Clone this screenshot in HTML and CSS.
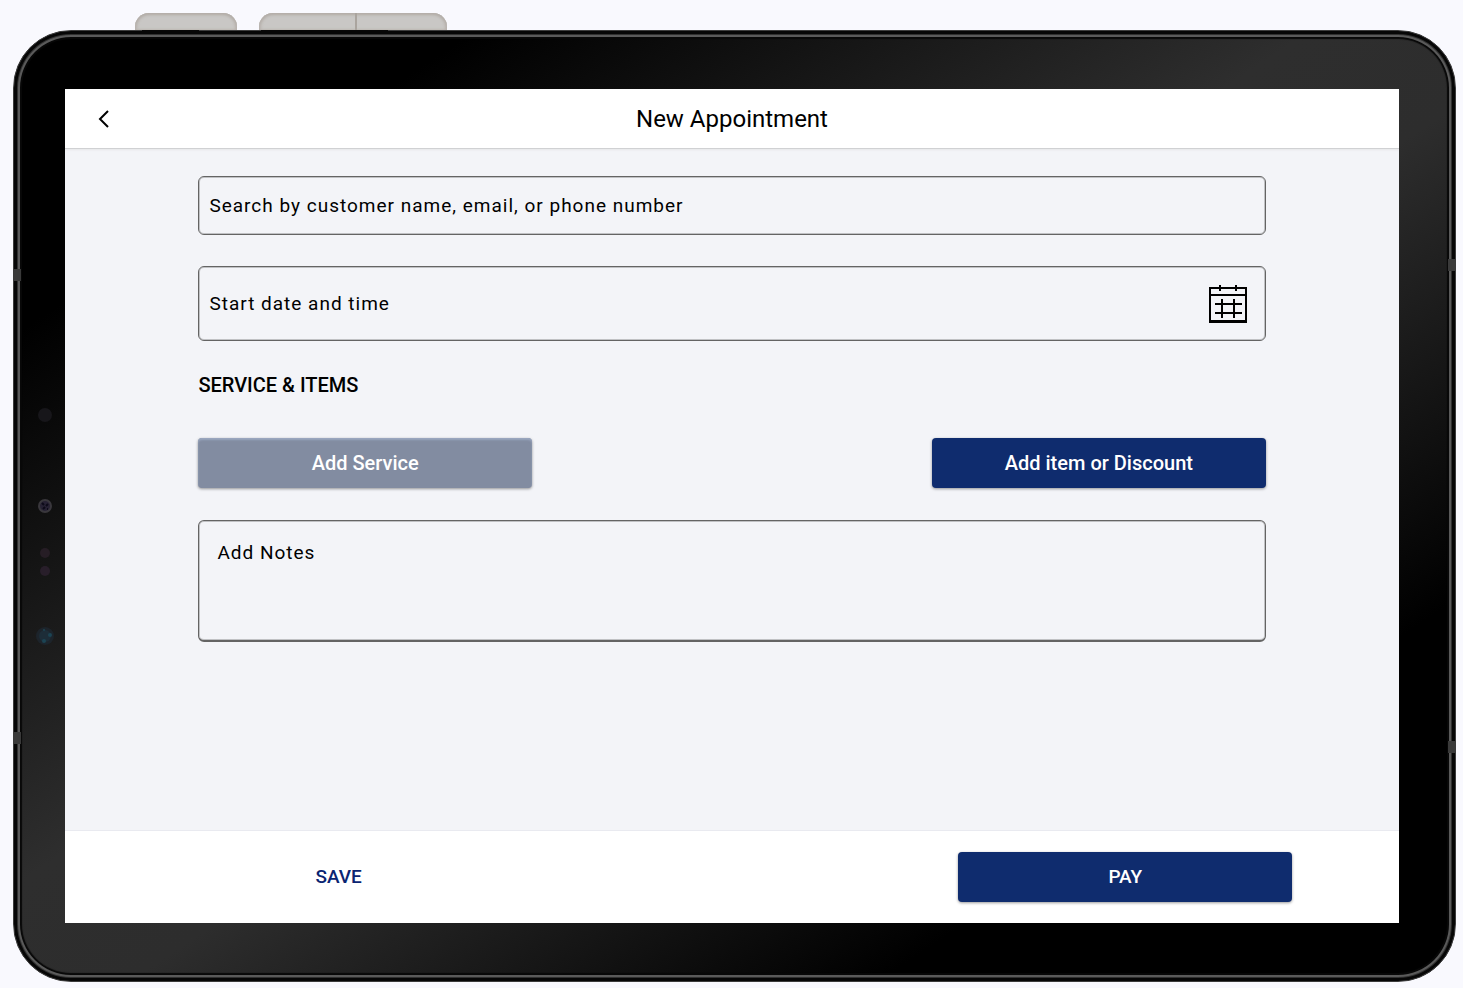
FILE: index.html
```html
<!DOCTYPE html>
<html lang="en">

<head>
    <meta charset="UTF-8">
    <meta name="viewport" content="width=device-width, initial-scale=1.0">
    <title>New Appointment</title>
    <link rel="stylesheet" href="styles.css">
</head>

<body>

    <div class="keys">
        <div class="key power"></div>
        <div class="key volume"></div>
    </div>

    <div class="tablet">
        <span class="band left-top"></span>
        <span class="band left-bottom"></span>
        <span class="band right-top"></span>
        <span class="band right-bottom"></span>

        <div class="sensors">
            <svg width="20" height="280" viewBox="0 0 20 280" aria-hidden="true">
                <circle cx="10" cy="49" r="7" fill="#17161a"/>
                <circle cx="10" cy="140" r="6" fill="#262133" stroke="#39373c" stroke-width="2"/>
                <path d="M7 137l2 2M13 138l-2 2M8 143l2-2M12 143l1 0" stroke="#0c0a18" stroke-width="2"/>
                <circle cx="10" cy="187" r="5" fill="#261d25"/>
                <circle cx="10" cy="205" r="5" fill="#281e2a"/>
                <circle cx="10" cy="270" r="9" fill="#1d242b"/>
                <circle cx="10" cy="270" r="6" fill="#1d2d38"/>
                <circle cx="15" cy="269" r="2" fill="#1c4453"/>
                <circle cx="9" cy="275" r="2" fill="#1c4453"/>
                <circle cx="9" cy="264" r="1" fill="#1c4453"/>
            </svg>
        </div>

        <div class="screen">
            <header class="topbar">
                <button class="back" type="button" aria-label="Back">
                    <svg width="14" height="20" viewBox="0 0 14 20" aria-hidden="true">
                        <path d="M11 2L3 10l8 8" fill="none" stroke="#000" stroke-width="2"/>
                    </svg>
                </button>
                <h1>New Appointment</h1>
            </header>

            <main class="form">
                <input class="field search" type="text" aria-label="Search customer" placeholder="Search by customer name, email, or phone number">

                <div class="field date">
                    <input type="text" aria-label="Start date and time" placeholder="Start date and time">
                    <button class="calendar" type="button" aria-label="Open calendar">
                        <svg width="38" height="38" viewBox="0 0 38 38" fill="none" stroke="#000" stroke-width="2" aria-hidden="true">
                            <path d="M1 3v34M37 3v34M0 3h38M0 10h38M0 37h38"/>
                            <path d="M0 36h38M11 0v6M27 0v6M6 19h27M6 28h27M13 14v19M25 14v19"/>
                        </svg>
                    </button>
                </div>

                <h2>SERVICE &amp; ITEMS</h2>

                <div class="actions">
                    <button class="btn grey" type="button">Add Service</button>
                    <button class="btn blue" type="button">Add item or Discount</button>
                </div>

                <textarea class="field notes" aria-label="Notes" placeholder="Add Notes"></textarea>
            </main>

            <footer class="bottombar">
                <button class="btn link" type="button">SAVE</button>
                <button class="btn blue" type="button">PAY</button>
            </footer>
        </div>
    </div>

</body>

</html>
```
FILE: styles.css
```css
* {
    box-sizing: border-box;
}

body {
    font-family: Roboto, 'Liberation Sans', sans-serif;
    background-color: #f9f9fe;
    color: #000;
    margin: 0;
    padding: 13px 7px 6px 13px;
    min-height: 100vh;
    display: flex;
    flex-direction: column;
}

button,
input,
textarea {
    font-family: inherit;
    color: inherit;
}

button {
    border: none;
    background: none;
    padding: 0;
    cursor: pointer;
}

/* Side keys of the tablet */
.keys {
    display: flex;
    gap: 22px;
    padding-left: 122px;
}

.key {
    position: relative;
    height: 17px;
    border-radius: 14px 14px 0 0;
    background-color: #c9c7c5;
    box-shadow: inset 0 2px 3px #b3ada8, inset 2px 0 3px #bbb6b1, inset -2px 0 3px #bbb6b1;
}

.key::after {
    content: "";
    position: absolute;
    z-index: 1;
    top: 17px;
    height: 1px;
    background-color: #080808;
}

.power {
    width: 102px;
}

.power::after {
    left: 7px;
    width: 57px;
}

.volume {
    width: 188px;
    display: flex;
    justify-content: center;
}

.volume::before {
    content: "";
    width: 2px;
    margin-left: 6px;
    background-color: #aaa49e;
}

.volume::after {
    left: 2px;
    width: 127px;
}

/* Tablet body */
.tablet {
    position: relative;
    flex: 1;
    display: flex;
    padding: 58px 56px 58px 0;
    border: 1px solid #3c3c3c;
    border-radius: 58px;
    background: linear-gradient(to bottom right, #000 16%, #2e2e2e 45%, #2d2d2d 54%, #000 80%);
    box-shadow: inset 0 0 0 3px #060606, inset 0 0 0 4px #303030, inset 0 0 0 6px #5a5a5a, inset 0 0 1px 8px #080808;
}

.band {
    position: absolute;
    width: 8px;
    height: 12px;
    background-color: #3a3a3a;
}

.left-top {
    left: -1px;
    top: 25%;
}

.left-bottom {
    left: -1px;
    bottom: 25%;
}

.right-top {
    right: -1px;
    top: 24%;
}

.right-bottom {
    right: -1px;
    bottom: 24%;
}

.sensors {
    width: 51px;
    padding-left: 21px;
    display: flex;
    align-items: center;
}

.screen {
    flex: 1;
    display: flex;
    flex-direction: column;
    overflow: hidden;
    background-color: #f3f4f8;
}

.topbar {
    display: grid;
    grid-template-columns: 80px 1fr 80px;
    align-items: center;
    height: 60px;
    background-color: #fff;
    border-bottom: 1px solid #d0d1d3;
    box-shadow: 0 1px 2px #e6e6e8;
}

.back {
    display: flex;
    padding-left: 32px;
}

h1 {
    margin: 0;
    font-size: 24px;
    line-height: 32px;
    font-weight: 400;
    text-align: center;
}

.form {
    flex: 1;
    display: flex;
    flex-direction: column;
    padding: 27px 10% 32px;
}

.field {
    width: 100%;
    border: 1px solid #646464;
    border-radius: 6px;
    background-color: transparent;
    box-shadow: inset 0 0 0 1px #c0c1c4;
}

.field,
.date input {
    font-size: 19px;
    line-height: 24px;
    letter-spacing: 1px;
    outline: none;
}

::placeholder {
    color: #000;
    opacity: 1;
}

.search {
    height: 59px;
    padding: 0 10px;
}

.date {
    display: flex;
    align-items: center;
    height: 75px;
    margin-top: 31px;
    padding: 0 18px 0 10px;
}

.date input {
    flex: 1;
    border: none;
    padding: 0;
    background: none;
}

.calendar {
    display: flex;
}

h2 {
    margin: 32px 0 41px;
    font-size: 20px;
    line-height: 24px;
    font-weight: 500;
}

.actions {
    display: grid;
    grid-template-columns: 1fr 1fr;
    column-gap: 37.5%;
}

.btn {
    height: 50px;
    border-radius: 4px;
    font-size: 20px;
    line-height: 24px;
    font-weight: 500;
}

.blue {
    background-color: #0f2c6e;
    color: #fff;
    box-shadow: 0 1px 3px rgba(0, 0, 0, 0.4);
}

.grey {
    background-color: #828ca1;
    color: #fff;
    box-shadow: inset 0 2px 2px #9aa7c0, 0 1px 3px rgba(0, 0, 0, 0.4);
}

.link {
    color: #0a2472;
}

.notes {
    height: 122px;
    margin-top: 32px;
    padding: 20px 18px;
    border-bottom-width: 2px;
    resize: none;
}

.bottombar {
    display: grid;
    grid-template-columns: 1fr 1fr;
    column-gap: 40.4%;
    align-items: center;
    height: 93px;
    padding: 0 8%;
    background-color: #fff;
    border-top: 1px solid #e9eaf0;
}

.bottombar .btn {
    font-size: 19px;
}
```
